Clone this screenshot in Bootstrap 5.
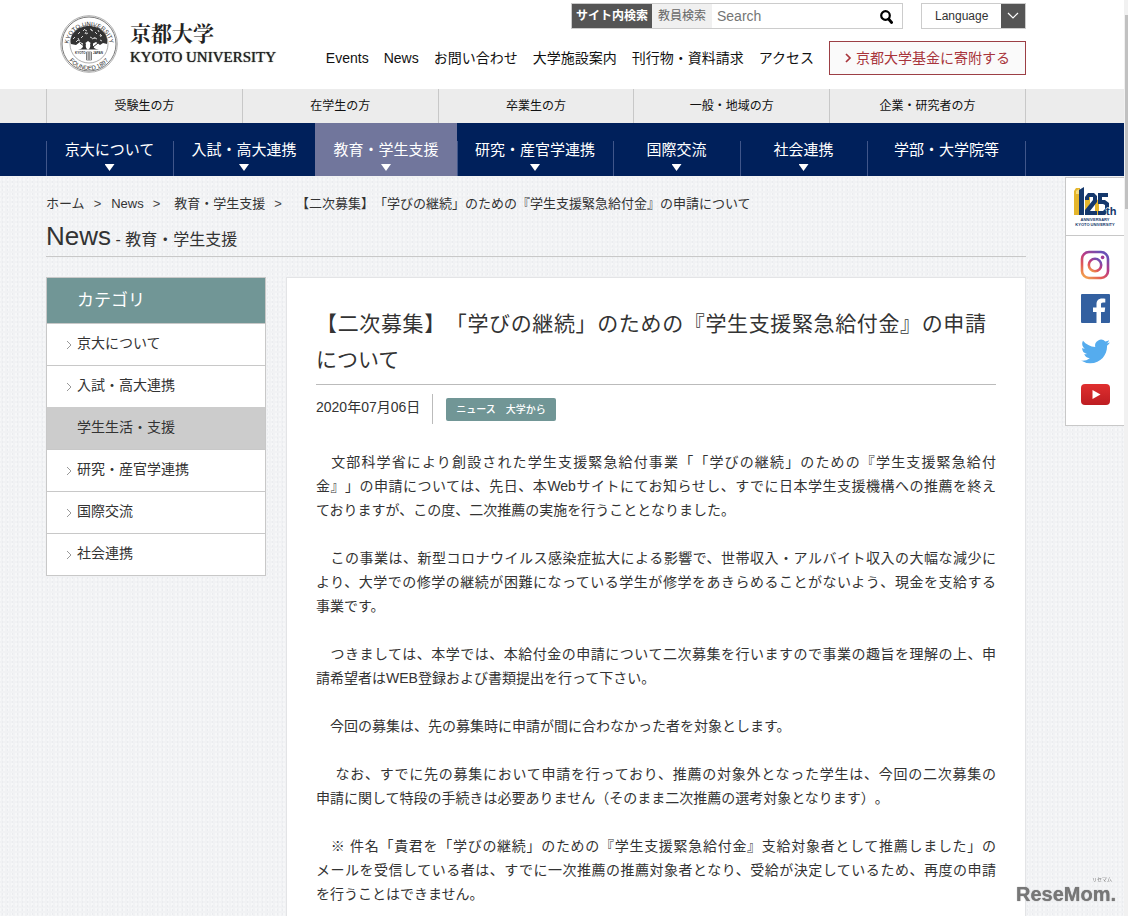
<!DOCTYPE html>
<html lang="ja">
<head>
<meta charset="utf-8">
<meta name="viewport" content="width=device-width, initial-scale=1">
<title>【二次募集】「学びの継続」のための『学生支援緊急給付金』の申請について | 京都大学</title>
<link href="https://cdn.jsdelivr.net/npm/bootstrap@5.3.0/dist/css/bootstrap.min.css" rel="stylesheet">
<script src="https://cdn.jsdelivr.net/npm/bootstrap@5.3.0/dist/js/bootstrap.bundle.min.js"></script>
<style>
:root { --navy:#00205b; --teal:#719696; --rule:#c8c8c8; }
body { font-family:"Liberation Sans","Noto Sans CJK JP",sans-serif; font-size:14px; line-height:24px; color:#333; background:#f1f2f4; text-spacing-trim:space-all; }
a { color:inherit; text-decoration:none; }
.page { height:100vh; overflow:hidden; padding-right:4px;
  background-color:#f1f2f4;
  background-image:radial-gradient(#eaecef 1px,transparent 1px),radial-gradient(#f6f7f8 1px,transparent 1px);
  background-size:5px 4px,4px 5px; background-position:0 0,2px 2px; }
.inner { margin-left:46px; margin-right:98px; }
.masthead { height:89px; background:#fff; }
.brand { padding:15px 0 0 14px; color:#222; }
.brand-ja { font-family:"Noto Serif CJK JP","Noto Sans CJK JP",serif; font-weight:700; font-size:21px; line-height:26px; }
.brand-en { font-family:"Liberation Serif",serif; font-size:15px; line-height:24px; text-shadow:0 0 1px #222; }
.tools { padding-top:3px; gap:18px; height:41px; }
.site-search { width:332px; height:26px; border:1px solid #ccc; background:#fff; }
.site-search button { flex:none; border:0; padding:0; font-size:12px; line-height:24px; }
.site-search .tab-on { width:80px; background:#555; color:#fff; font-weight:700; }
.site-search .tab-off { width:60px; background:#f0f0f0; color:#666; }
.site-search input { width:0; border:0; outline:0; padding:0 5px; min-width:0; font-size:14px; color:#555; }
.site-search input::placeholder { color:#757575; }
.site-search .go { width:32px; background:#fff; }
.lang { width:105px; height:26px; border:1px solid #ccc; background:#fff; }
.lang select { appearance:none; border:0; background:#fff; font-size:12px; line-height:24px; padding:0 0 0 13px; color:#333; min-width:0; }
.lang-arrow { width:24px; background:#555; }
.util { gap:15px; color:#111; line-height:34px; }
.donate { border:1px solid #9c3f45; background:#fafafa; color:#a8343b; padding:0 15px; line-height:32px; gap:4px; }
.audience { background:#ececec; height:34px; }
.audience a { border-left:1px solid var(--rule); font-size:12px; line-height:34px; color:#111; }
.audience a:last-child { border-right:1px solid var(--rule); }
.gnav { background:var(--navy); height:53px; }
.gnav a { color:#fff; font-size:15px; line-height:20px; min-width:127px; padding:17px 18px 0; white-space:nowrap;
  background:linear-gradient(#40568a,#40568a) left bottom/1px 35px no-repeat; }
.gnav a.wide { min-width:142px; }
.gnav a.current { background:#71769c; }
.gnav a:last-child { background:linear-gradient(#40568a,#40568a) left bottom/1px 35px no-repeat,linear-gradient(#40568a,#40568a) right bottom/1px 35px no-repeat; }
.tri { width:10px; height:7px; margin-top:4px; background:#fff; clip-path:polygon(0 0,100% 0,50% 100%); }
.crumbs { font-size:13px; line-height:20px; padding-top:18px; white-space:nowrap; }
.crumbs .breadcrumb-item + .breadcrumb-item { padding-left:9px; }
.crumbs .breadcrumb-item + .breadcrumb-item::before { content:">"; color:#444; padding-right:10px; }
.crumbs .breadcrumb-item.far::before { padding-right:14px; }
.section-title { font-size:16px; line-height:36px; margin:4px 0 20px; height:39px; border-bottom:1px solid var(--rule); font-weight:400; }
.section-title b { font-size:26px; font-weight:400; }
.columns { gap:20px; }
.side { flex:0 0 220px; border:1px solid var(--rule); background:#fff; }
.side h2 { background:var(--teal); color:#fff; font-size:17px; line-height:45px; padding-left:30px; margin:0; font-weight:400; }
.side a { height:42px; line-height:39px; border-top:1px solid var(--rule); padding-left:19px; gap:5px; }
.side a.here { background:#ccc; border-color:#ccc; padding-left:30px; }
.article { background:#fff; border:1px solid #e3e4e6; padding:28px 29px 60px; min-width:0; }
.article h1 { font-size:21px; line-height:36px; font-weight:400; margin:0; padding-bottom:6px; border-bottom:1px solid #bbb; color:#333; }
.article h1 .fill { margin-right:10px; }
/* full text lines run from margin to margin */
.fill { display:block; text-align:justify; text-align-last:justify; }
.meta { margin-top:9px; gap:13px; }
.meta time { border-right:1px solid #bbb; padding-right:12px; line-height:26px; height:30px; }
.tagline { background:var(--teal); color:#fff; font-size:10px; line-height:23px; height:23px; padding:0 10px; border-radius:2px; font-weight:500; }
.story { padding-top:26px; }
.story p { margin-bottom:24px; }
.rail { position:fixed; top:177px; right:4px; width:59px; border:1px solid var(--rule); border-right:0; background:#fff; z-index:2; }
.rail-top { height:58px; border-bottom:1px solid var(--rule); padding-top:9px; }
.rail-icons { height:189px; gap:14px; padding-top:14px; }
.rail-icons a, .rail svg { display:block; }
.scroll { position:fixed; top:0; right:0; width:4px; height:100vh; background:#f1f1f1; }
.scroll-thumb { margin:15px 0 0 1px; height:194px; background:#c1c1c1; }
.stamp { position:fixed; right:12px; bottom:10px; color:#777; z-index:3; }
.stamp b { display:block; font-size:20px; line-height:24px; text-shadow:0 0 1px #777; }
.stamp small { display:block; text-align:right; font-size:5px; line-height:6px; padding-right:4px; }
</style>
</head>
<body>
<div class="page">
  <header class="masthead">
    <div class="inner d-flex justify-content-between">
      <a href="#" class="brand d-flex text-nowrap">
        <svg width="58" height="58" viewBox="0 0 58 58" aria-label="京都大学 校章">
          <circle cx="29" cy="29" r="27" fill="#fff" stroke="#555" stroke-width=".8"/>
          <circle cx="29" cy="29" r="28.300" fill="none" stroke="#777" stroke-width=".6"/>
          <circle cx="29" cy="29" r="19" fill="#fff" stroke="#777" stroke-width=".6"/>
          <path id="ringTop" d="M8 32A21 21 0 1 1 50 32" fill="none"/>
          <path id="ringLow" d="M4 30A25 25 0 0 0 54 30" fill="none"/>
          <text font-family="Liberation Sans" font-size="6" fill="#333" text-anchor="middle"><textPath href="#ringTop" startOffset="50%">KYOTO UNIVERSITY</textPath></text>
          <text font-family="Liberation Sans" font-size="6" fill="#333" text-anchor="middle"><textPath href="#ringLow" startOffset="50%">FOUNDED 1897</textPath></text>
          <path d="M11 29C9 20 17 11 29 11S49 20 47 29L43 28 40 30 36 27 32 29 28 26 24 29 20 27 16 30Z" fill="#333"/>
          <path d="M13 24l2-2m1 5 2-2m0-6 2-2m1 6 2-2m0-5 2-2m1 5 2-1m2-4 2 1m-2 7 2 1m3-6 2 2m-2 4 2 1m3-5 2 2m-2 4 2 1m-17-11 2 1m4-1 2 1m-15 9 2 1m12-2 2-1m6-3 1 2m-23 1 1 2m7-8-1 2m10 3-1 2m4-9 1 2" stroke="#fff" stroke-width=".8"/>
          <path d="M18 34.500q6 0 5-7l3 1q-1 5 2 6 3-1 2-6l3-1q-1 7 6 7z" fill="#333"/>
          <path d="M20 28l5 4M38 28l-5 4" stroke="#333"/>
          <text x="15" y="39" font-family="Liberation Sans" font-weight="700" font-size="3" fill="#333">KYOTO</text>
          <text x="33" y="39" font-family="Liberation Sans" font-weight="700" font-size="3" fill="#333">JAPAN</text>
          <path d="M26.500 37h5v8h-5zM26.500 39h5M26.500 41h5M26.500 43h5M29 37v8" stroke="#555" stroke-width=".7" fill="none"/>
        </svg>
        <span class="d-flex flex-column ps-2 ms-1 pt-1"><span class="brand-ja">京都大学</span><span class="brand-en">KYOTO UNIVERSITY</span></span>
      </a>
      <div>
        <div class="tools d-flex justify-content-end">
          <form class="site-search d-flex" role="search">
            <button type="button" class="tab-on">サイト内検索</button>
            <button type="button" class="tab-off">教員検索</button>
            <input class="flex-grow-1" type="search" placeholder="Search" aria-label="Search">
            <button type="submit" class="go" aria-label="検索"><svg width="13" height="14" viewBox="0 0 13 14"><circle cx="5.5" cy="5.5" r="4.3" fill="none" stroke="#000" stroke-width="2.2"/><path d="m8.6 9 3 3.5" stroke="#000" stroke-width="2.8" stroke-linecap="round"/></svg></button>
          </form>
          <div class="lang d-flex">
            <select class="flex-grow-1" aria-label="Language"><option>Language</option></select>
            <span class="lang-arrow d-flex align-items-center justify-content-center"><svg width="12" height="8" viewBox="0 0 12 8"><path d="m1 1 5 5 5-5" fill="none" stroke="#fff" stroke-width="1.2"/></svg></span>
          </div>
        </div>
        <nav class="util d-flex text-nowrap">
          <a href="#">Events</a><a href="#">News</a><a href="#">お問い合わせ</a><a href="#">大学施設案内</a><a href="#">刊行物・資料請求</a><a href="#">アクセス</a>
          <a href="#" class="donate d-flex align-items-center"><svg width="7" height="10" viewBox="0 0 7 10"><path d="m1 1 4 4-4 4" fill="none" stroke="#a8343b" stroke-width="1.7"/></svg>京都大学基金に寄附する</a>
        </nav>
      </div>
    </div>
  </header>
  <nav class="audience"><div class="inner d-flex text-center">
    <a class="col" href="#">受験生の方</a><a class="col" href="#">在学生の方</a><a class="col" href="#">卒業生の方</a><a class="col" href="#">一般・地域の方</a><a class="col" href="#">企業・研究者の方</a>
  </div></nav>
  <nav class="gnav"><div class="inner d-flex h-100">
    <a class="d-flex flex-column align-items-center" href="#">京大について<span class="tri"></span></a>
    <a class="d-flex flex-column align-items-center wide" href="#">入試・高大連携<span class="tri"></span></a>
    <a class="d-flex flex-column align-items-center wide current" href="#">教育・学生支援<span class="tri"></span></a>
    <a class="d-flex flex-column align-items-center" href="#">研究・産官学連携<span class="tri"></span></a>
    <a class="d-flex flex-column align-items-center" href="#">国際交流<span class="tri"></span></a>
    <a class="d-flex flex-column align-items-center" href="#">社会連携<span class="tri"></span></a>
    <a class="d-flex flex-column align-items-center flex-grow-1" href="#">学部・大学院等</a>
  </div></nav>
  <div class="inner">
    <nav class="crumbs" aria-label="breadcrumb"><ol class="breadcrumb flex-nowrap m-0">
      <li class="breadcrumb-item"><a href="#">ホーム</a></li><li class="breadcrumb-item"><a href="#">News</a></li><li class="breadcrumb-item far"><a href="#">教育・学生支援</a></li><li class="breadcrumb-item far text-reset">【二次募集】「学びの継続」のための『学生支援緊急給付金』の申請について</li>
    </ol></nav>
    <h2 class="section-title"><b>News</b> - 教育・学生支援</h2>
    <div class="columns d-flex align-items-start">
      <nav class="side">
        <h2>カテゴリ</h2>
        <a class="d-flex" href="#"><svg class="align-self-center" width="6" height="10" viewBox="0 0 6 10"><path d="m1 1 4 4-4 4" fill="none" stroke="#999"/></svg>京大について</a>
        <a class="d-flex" href="#"><svg class="align-self-center" width="6" height="10" viewBox="0 0 6 10"><path d="m1 1 4 4-4 4" fill="none" stroke="#999"/></svg>入試・高大連携</a>
        <a class="d-flex here" href="#">学生生活・支援</a>
        <a class="d-flex" href="#"><svg class="align-self-center" width="6" height="10" viewBox="0 0 6 10"><path d="m1 1 4 4-4 4" fill="none" stroke="#999"/></svg>研究・産官学連携</a>
        <a class="d-flex" href="#"><svg class="align-self-center" width="6" height="10" viewBox="0 0 6 10"><path d="m1 1 4 4-4 4" fill="none" stroke="#999"/></svg>国際交流</a>
        <a class="d-flex" href="#"><svg class="align-self-center" width="6" height="10" viewBox="0 0 6 10"><path d="m1 1 4 4-4 4" fill="none" stroke="#999"/></svg>社会連携</a>
      </nav>
      <main class="article flex-grow-1">
        <h1><span class="fill">【二次募集】「学びの継続」のための『学生支援緊急給付金』の申請</span>について</h1>
        <div class="meta d-flex align-items-center">
          <time datetime="2020-07-06">2020年07月06日</time>
          <span class="tagline">ニュース　大学から</span>
        </div>
        <div class="story">
          <p><span class="fill">　文部科学省により創設された学生支援緊急給付事業「「学びの継続」のための『学生支援緊急給付</span><span class="fill">金』」の申請については、先日、本Webサイトにてお知らせし、すでに日本学生支援機構への推薦を終え</span>ておりますが、この度、二次推薦の実施を行うこととなりました。</p>
          <p><span class="fill">　この事業は、新型コロナウイルス感染症拡大による影響で、世帯収入・アルバイト収入の大幅な減少に</span><span class="fill">より、大学での修学の継続が困難になっている学生が修学をあきらめることがないよう、現金を支給する</span>事業です。</p>
          <p><span class="fill">　つきましては、本学では、本給付金の申請について二次募集を行いますので事業の趣旨を理解の上、申</span>請希望者はWEB登録および書類提出を行って下さい。</p>
          <p>　今回の募集は、先の募集時に申請が間に合わなかった者を対象とします。</p>
          <p><span class="fill">　 なお、すでに先の募集において申請を行っており、推薦の対象外となった学生は、今回の二次募集の</span>申請に関して特段の手続きは必要ありません（そのまま二次推薦の選考対象となります）。</p>
          <p><span class="fill">　※ 件名「貴君を「学びの継続」のための『学生支援緊急給付金』支給対象者として推薦しました」の</span><span class="fill">メールを受信している者は、すでに一次推薦の推薦対象者となり、受給が決定しているため、再度の申請</span>を行うことはできません。</p>
        </div>
      </main>
    </div>
  </div>
</div>
<aside class="rail">
  <a href="#" class="rail-top d-flex justify-content-center" aria-label="125周年">
    <svg width="44" height="40" viewBox="0 0 44 40">
      <path d="M1 4 3 1h4v27H1z" fill="#e5b62c"/><path d="M6 3 11 0v28H6z" fill="#15386c"/><path d="M3 4l3-2v5H3z" fill="#f6dc80"/>
      <path d="M12 11l5-3v9l-5 8z" fill="#e5b62c"/><path d="M22 14l4-2v16h-4z" fill="#e5b62c"/>
      <path d="M12 10l3-4h6l3 3v6l-7 9h7v4H12v-5l8-10v-3h-4v3h-4z" fill="#15386c"/>
      <path d="M25 6h10v4h-6v3h3l4 3v8l-4 4h-7v-4h5l2-2v-4l-2-1h-5z" fill="#15386c"/>
      <text x="33" y="28" font-family="Liberation Sans" font-weight="700" font-size="11" fill="#15386c" stroke="#fff" stroke-width="1" paint-order="stroke">th</text>
      <text x="22" y="34" text-anchor="middle" font-family="Liberation Sans" font-weight="700" font-size="4" fill="#15386c">ANNIVERSARY</text>
      <text x="22" y="39" text-anchor="middle" font-family="Liberation Sans" font-weight="700" font-size="4" fill="#15386c">KYOTO UNIVERSITY</text>
    </svg>
  </a>
  <div class="rail-icons d-flex flex-column align-items-center">
    <a href="#" aria-label="Instagram"><svg width="30" height="30" viewBox="0 0 30 30"><defs><linearGradient id="ig" x1="0" y1="1" x2=".7" y2="0"><stop offset="0" stop-color="#f5b04a"/><stop offset=".35" stop-color="#e25a55"/><stop offset=".65" stop-color="#b83a86"/><stop offset="1" stop-color="#6a50b5"/></linearGradient></defs><g fill="none" stroke="url(#ig)" stroke-width="2.6"><rect x="2" y="2" width="26" height="26" rx="7"/><circle cx="15" cy="15" r="6.2"/></g><circle cx="22.6" cy="7.4" r="1.8" fill="#a03c96"/></svg></a>
    <a href="#" aria-label="Facebook"><svg width="29" height="29" viewBox="0 0 29 29"><rect width="29" height="29" rx="1" fill="#3360a0"/><path d="M15.500 29V18H12v-4.500h3.500V10.200C15.500 6.600 17.700 4.500 21 4.500c1.600 0 2.900.1 3.300.2v3.900h-2.200c-1.800 0-2.100.9-2.100 2.100v2.800h4.200l-.6 4.500H20V29z" fill="#fff"/></svg></a>
    <a href="#" aria-label="Twitter"><svg width="29" height="29" viewBox="0 0 24 24"><path fill="#55acee" d="M23.950 4.570a10 10 0 0 1-2.820.78 4.960 4.960 0 0 0 2.160-2.730c-.95.56-2 .96-3.130 1.190a4.920 4.920 0 0 0-8.380 4.480C7.690 8.100 4.070 6.130 1.640 3.160a4.820 4.820 0 0 0-.67 2.480c0 1.710.87 3.210 2.190 4.100a4.900 4.900 0 0 1-2.230-.62v.06a4.920 4.920 0 0 0 3.950 4.830 5 5 0 0 1-2.210.08 4.940 4.940 0 0 0 4.600 3.420A9.870 9.870 0 0 1 0 19.540a14 14 0 0 0 7.550 2.210c9.050 0 14-7.500 14-13.980 0-.21 0-.42-.02-.63a9.940 9.940 0 0 0 2.420-2.570z"/></svg></a>
    <a href="#" aria-label="YouTube"><svg width="29" height="29" viewBox="0 0 29 29"><defs><linearGradient id="yt" x2="0" y2="1"><stop stop-color="#e02f2f"/><stop offset="1" stop-color="#bd1d22"/></linearGradient></defs><rect y="4" width="29" height="21" rx="4" fill="url(#yt)"/><path d="m11.500 10 8 4.500-8 4.500z" fill="#fff"/></svg></a>
  </div>
</aside>
<div class="scroll"><div class="scroll-thumb"></div></div>
<div class="stamp"><small>リセマム</small><b>ReseMom.</b></div>
</body>
</html>
